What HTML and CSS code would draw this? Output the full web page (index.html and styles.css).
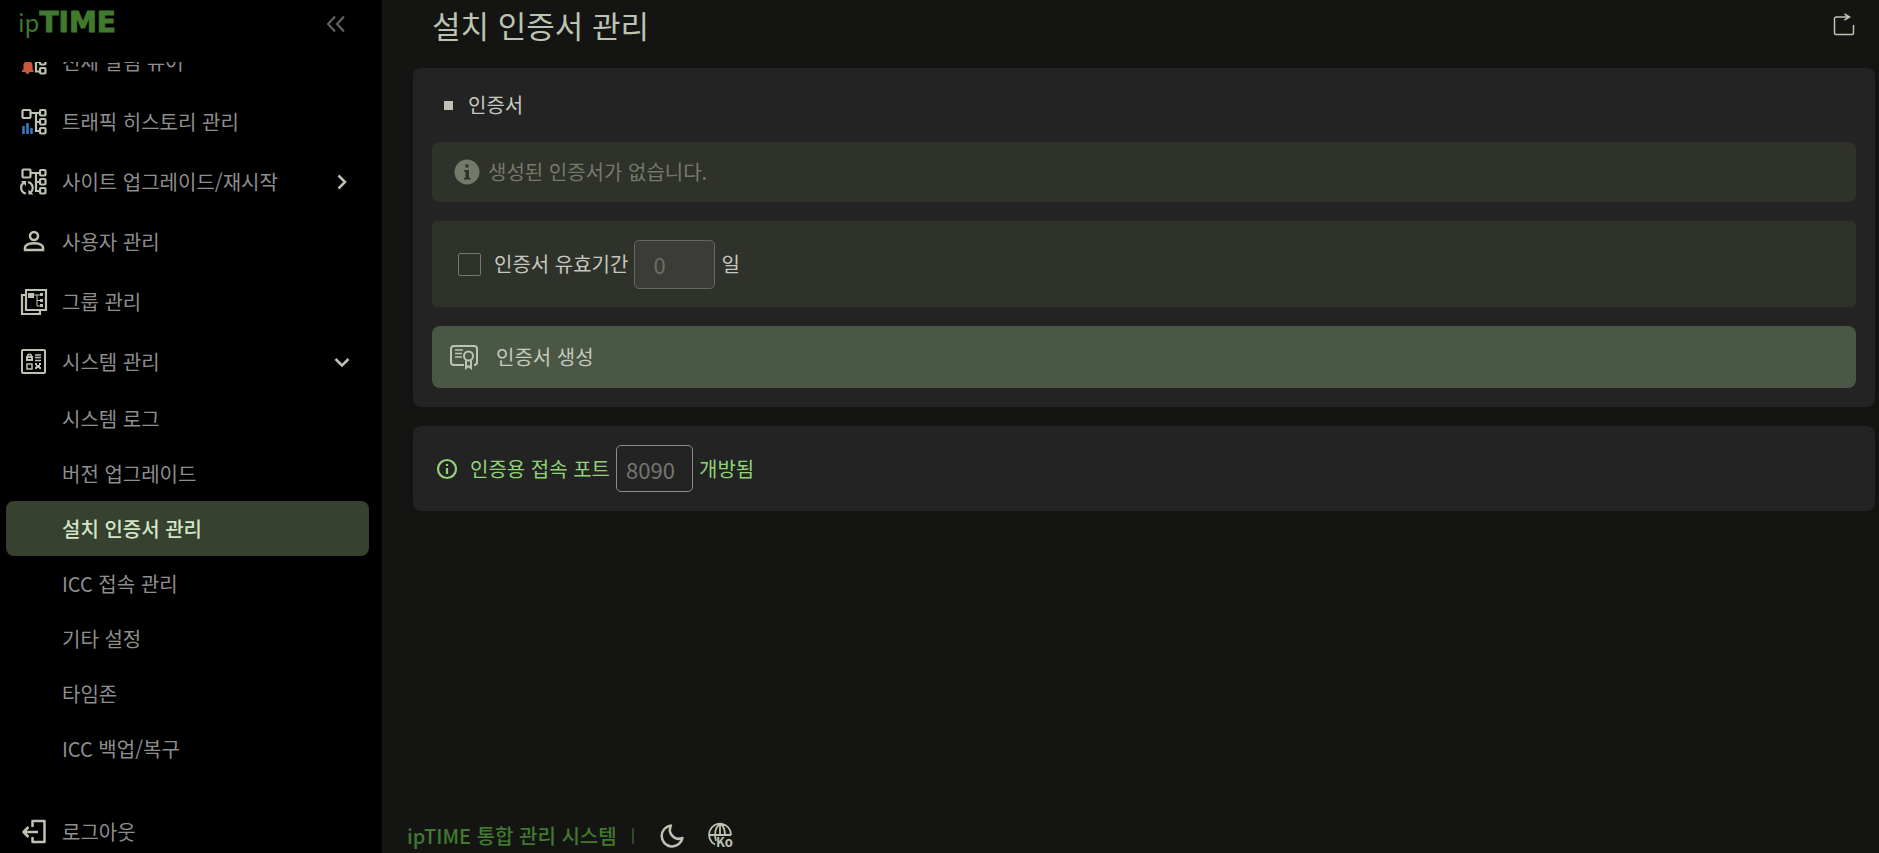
FILE: index.html
```
<!DOCTYPE html>
<html lang="ko">
<head>
    <meta charset="UTF-8">
    <meta name="viewport" content="width=device-width, initial-scale=1.0">
    <title>ipTIME 통합 관리 시스템</title>
    <link rel="stylesheet" href="styles.css">
</head>
<body>
    <div class="layout">
        <aside class="sidebar">
            <div class="sidebar-header">
                <a href="#" class="logo"><span class="logo-ip">ip</span><span class="logo-time">TIME</span></a>
                <button type="button" class="icon-button" aria-label="메뉴 접기">
                    <svg width="20" height="18" viewBox="0 0 20 18" fill="none" stroke="#666660" stroke-width="2"><path d="M9 1.500 2 9l7 7.500M18 1.500 11 9l7 7.500"/></svg>
                </button>
            </div>

            <nav class="menu">
                <div class="menu-scroll">
                    <a href="#" class="menu-item">
                        <svg class="icon" viewBox="0 0 28 28" fill="none" stroke="#bcc3b2" stroke-width="2.200"><path d="M2.500 2.500h8v8h-8zM10 5h9M16 5v18.500h4M16 14h4"/><rect x="20" y="2" width="5.500" height="5.500" rx="1"/><rect x="20" y="11" width="5.500" height="5.500" rx="1"/><rect x="20" y="20" width="5.500" height="5.500" rx="1"/><path d="M2 24v-1.500l1.500-1.500v-4c0-5 9-5 9 0v4l1 1.500V24h-4a2 2 0 0 1-4 0z" fill="#c9583e" stroke="none"/></svg>
                        <span>전체 알림 뷰어</span>
                    </a>
                    <a href="#" class="menu-item">
                        <svg class="icon" viewBox="0 0 28 28" fill="none" stroke="#bcc3b2" stroke-width="2.200"><rect x="2.500" y="2" width="8" height="8" rx="1"/><path d="M10.500 5h9M16 5v18h4M16 14h4"/><rect x="20" y="2" width="5.500" height="5.500" rx="1"/><rect x="20" y="11" width="5.500" height="5.500" rx="1"/><rect x="20" y="20" width="5.500" height="5.500" rx="1"/><path d="M3.500 26v-8M7.500 26V15M11.500 26v-6" stroke="#3d7cc9" stroke-width="2.500"/></svg>
                        <span>트래픽 히스토리 관리</span>
                    </a>
                    <a href="#" class="menu-item">
                        <svg class="icon" viewBox="0 0 28 28" fill="none" stroke="#bcc3b2" stroke-width="2.200"><rect x="2.500" y="1.500" width="8" height="8" rx="1"/><path d="M10.500 5h9M16 5v18h4M16 14h4"/><rect x="20" y="2" width="5.500" height="5.500" rx="1"/><rect x="20" y="11" width="5.500" height="5.500" rx="1"/><rect x="20" y="20" width="5.500" height="5.500" rx="1"/><path d="M6 25.500A6 6 0 0 1 4 14.500M8 14a6 6 0 0 1 2.500 10.500"/><path d="M1 13h5v5zM13.500 26.500h-5v-5z" fill="#bcc3b2" stroke="none"/></svg>
                        <span>사이트 업그레이드/재시작</span>
                        <svg class="chevron" viewBox="0 0 16 16" fill="none" stroke="#bcc3b2" stroke-width="2.500"><path d="m4.500 1.500 6.500 6.500-6.500 6.500"/></svg>
                    </a>
                    <a href="#" class="menu-item">
                        <svg class="icon" viewBox="0 0 28 28" fill="none" stroke="#bcc3b2" stroke-width="2.500"><circle cx="14" cy="8" r="4"/><path d="M5 22v-2c0-6.500 18-6.500 18 0v2z"/></svg>
                        <span>사용자 관리</span>
                    </a>
                    <a href="#" class="menu-item">
                        <svg class="icon" viewBox="0 0 28 28" fill="none" stroke="#bcc3b2" stroke-width="2.200"><path d="M6 2h20v20H6z"/><path d="M5 7H2v19h18v-3"/><path d="M8 5h6v5H8z" fill="#bcc3b2" stroke="none"/><path d="M14 7h6M17 7v11h3M17 12.500h3" stroke-width="1"/><path d="M20 5h3v3h-3zM20 11h3v3h-3zM20 16h3v3h-3z" fill="#bcc3b2" stroke="none"/></svg>
                        <span>그룹 관리</span>
                    </a>
                    <a href="#" class="menu-item">
                        <svg class="icon" viewBox="0 0 28 28" fill="none" stroke="#bcc3b2" stroke-width="2"><rect x="2" y="2" width="23" height="23" rx="1"/><path d="M7 9h5v3H7z"/><path d="M7.500 8.500c0-3 4-3 4 0" stroke-width="1.500"/><path d="M15 7h6M15 9.500h6M15 12.500h6" stroke-width="1.500"/><path d="M7 16h5v5H7z" stroke-width="1.500"/><path d="M15 15h2v2h2v-2h2v2h-1v2h1v2h-2v-1h-2v1h-2v-2h1v-2h-1z" fill="#bcc3b2" stroke="none"/></svg>
                        <span>시스템 관리</span>
                        <svg class="chevron" viewBox="0 0 16 16" fill="none" stroke="#bcc3b2" stroke-width="2.500"><path d="m1.500 5 6.500 6.500L14.500 5"/></svg>
                    </a>
                    <a href="#" class="submenu-item">시스템 로그</a>
                    <a href="#" class="submenu-item">버전 업그레이드</a>
                    <a href="#" class="submenu-item active">설치 인증서 관리</a>
                    <a href="#" class="submenu-item">ICC 접속 관리</a>
                    <a href="#" class="submenu-item">기타 설정</a>
                    <a href="#" class="submenu-item">타임존</a>
                    <a href="#" class="submenu-item">ICC 백업/복구</a>
                </div>
            </nav>

            <a href="#" class="menu-item logout">
                <svg class="icon" viewBox="0 0 28 28" fill="none" stroke="#bcc3b2" stroke-width="2.500" stroke-linejoin="round"><path d="M12.500 9V3h12v21h-12v-5M18 14H3M8.500 9l-5 5 5 5"/></svg>
                <span>로그아웃</span>
            </a>
        </aside>

        <main class="content">
            <header class="page-header">
                <h1>설치 인증서 관리</h1>
                <button type="button" class="icon-button" aria-label="새로고침">
                    <svg width="22" height="24" viewBox="0 0 22 24" fill="none" stroke="#bcc3b2" stroke-width="1.500"><path d="M15 4H3a1.500 1.500 0 0 0-1.500 1.500V20A1.500 1.500 0 0 0 3 21.500h16a1.500 1.500 0 0 0 1.500-1.500v-8M11.500 1l5 3-5 3"/></svg>
                </button>
            </header>

            <section class="card">
                <h2>인증서</h2>
                <div class="notice">
                    <svg width="26" height="26" viewBox="0 0 26 26"><circle cx="13" cy="13" r="12.500" fill="#75796a"/><path d="M11.500 5.500h3v3h-3zM10 11h5v8h1.500v1.500H10V19h1.500v-6.500H10z" fill="#2f312b"/></svg>
                    <p>생성된 인증서가 없습니다.</p>
                </div>
                <div class="period">
                    <input type="checkbox" id="usePeriod">
                    <label for="usePeriod">인증서 유효기간</label>
                    <input type="text" id="period" class="period-input" value="0" aria-label="유효기간" disabled>
                    <span>일</span>
                </div>
                <button type="button" class="create-button">
                    <svg width="28" height="26" viewBox="0 0 28 26" fill="none" stroke="#bcc3b2" stroke-width="2"><path d="M14 21H4a3 3 0 0 1-3-3V5a3 3 0 0 1 3-3h20a3 3 0 0 1 3 3v13a3 3 0 0 1-3 3"/><path d="M5 6h8M5 9.500h7M5 13h7" stroke-width="1.500"/><circle cx="18.500" cy="12" r="4.500"/><path d="M16 16.500V24l2.500-2 2.500 2v-7.500"/></svg>
                    <span>인증서 생성</span>
                </button>
            </section>

            <section class="card port-card">
                <svg width="22" height="22" viewBox="0 0 22 22" fill="none" stroke="#8fd278" stroke-width="2.200"><circle cx="11" cy="11" r="9"/><path d="M11 10v6M11 6v2"/></svg>
                <label for="port">인증용 접속 포트</label>
                <input type="text" id="port" class="port-input" value="8090" readonly>
                <span>개방됨</span>
            </section>

            <footer class="footer">
                <span class="footer-name">ipTIME 통합 관리 시스템</span>
                <span class="footer-line"></span>
                <button type="button" class="icon-button" aria-label="다크 모드">
                    <svg width="26" height="26" viewBox="0 0 26 26" fill="none" stroke="#bcc3b2" stroke-width="2.500" stroke-linejoin="round"><path d="M12 2.500A10.500 10.500 0 1 0 23.500 15 9 9 0 0 1 12 2.500z"/></svg>
                </button>
                <button type="button" class="icon-button" aria-label="언어 선택">
                    <svg class="lang-icon" width="28" height="28" viewBox="0 0 28 28" fill="none" stroke="#bcc3b2" stroke-width="1.800"><path d="M8 22.500A11 11 0 1 1 24 13M2 13h22M9 19c-2-6-1-14 4-17 4 2 5 6 5 11M13 2v11"/><text x="9" y="25" class="lang-text">Ko</text></svg>
                </button>
            </footer>
        </main>
    </div>
</body>
</html>
```
FILE: styles.css
```
* {
    box-sizing: border-box;
}
body {
    margin: 0;
    font-family: "Noto Sans CJK KR", "Noto Sans", sans-serif;
    font-size: 20px;
    line-height: 30px;
    color: #c4c8be;
    background-color: #141512;
}
a {
    color: inherit;
    text-decoration: none;
}
h1, h2, p {
    margin: 0;
    font-weight: normal;
}
button, input {
    font-family: inherit;
    font-size: inherit;
    line-height: inherit;
    color: inherit;
}
.layout {
    display: flex;
    height: 100vh;
}
.icon-button {
    display: flex;
    padding: 0;
    border: none;
    background: none;
    cursor: pointer;
}

/* sidebar */
.sidebar {
    display: flex;
    flex-direction: column;
    flex: 0 0 382px;
    background-color: #000;
}
.sidebar-header {
    display: flex;
    align-items: center;
    justify-content: space-between;
    flex: none;
    height: 62px;
    padding: 0 36px 14px 18px;
}
.logo {
    display: flex;
    align-items: baseline;
    padding-bottom: 4px;
    color: #41792e;
}
.logo-ip {
    font-size: 24px;
}
.logo-time {
    font-family: "DejaVu Sans", sans-serif;
    font-size: 28px;
    font-weight: bold;
    -webkit-text-stroke: 1px #41792e;
}
.menu {
    flex: 1;
    min-height: 0;
    overflow: hidden;
}
.menu-scroll {
    margin-top: -31px;
}
.menu-item {
    display: flex;
    align-items: center;
    gap: 14px;
    height: 60px;
    padding: 2px 32px 0 20px;
    color: #8e8e8e;
}
.icon {
    flex: none;
    width: 28px;
    height: 28px;
}
.chevron {
    width: 16px;
    height: 16px;
    margin-left: auto;
}
.submenu-item {
    display: flex;
    align-items: center;
    height: 55px;
    margin: 0 13px 0 6px;
    padding-left: 56px;
    border-radius: 8px;
    color: #8e8e8e;
}
.submenu-item.active {
    background-color: #364130;
    color: #d3e5c6;
    font-weight: 500;
}
.logout {
    flex: none;
    margin-bottom: -8px;
}

/* content */
.content {
    display: flex;
    flex-direction: column;
    flex: 1;
    min-width: 0;
    padding: 0 4px 0 31px;
}
.page-header {
    display: flex;
    align-items: center;
    justify-content: space-between;
    height: 68px;
    padding: 0 20px 18px 19px;
    color: #bcc3b2;
}
h1 {
    font-size: 31px;
    line-height: 44px;
}
.card {
    display: flex;
    flex-direction: column;
    gap: 19px;
    margin-bottom: 19px;
    padding: 19px;
    border-radius: 8px;
    background-color: #232323;
}
h2 {
    display: flex;
    align-items: center;
    gap: 15px;
    height: 36px;
    padding-left: 12px;
    font-size: 20px;
}
h2::before {
    content: "";
    width: 9px;
    height: 9px;
    background-color: #bcc3b2;
}
.notice {
    display: flex;
    align-items: center;
    gap: 8px;
    height: 60px;
    padding: 0 22px;
    border-radius: 8px;
    background-color: #2f312b;
    color: #75796a;
}
.period {
    display: flex;
    align-items: center;
    gap: 6px;
    height: 86px;
    padding: 0 26px;
    border-radius: 6px;
    background-color: #2f312b;
}
input[type="checkbox"] {
    appearance: none;
    width: 23px;
    height: 23px;
    margin: 0 7px 0 0;
    border: 1px solid #75796a;
    border-radius: 2px;
}
input[type="text"] {
    padding: 0 9px;
    border: 1px solid #8e8e88;
    border-radius: 5px;
    background-color: transparent;
    color: #75756e;
    font-size: 22px;
}
input.period-input {
    width: 81px;
    height: 49px;
    padding: 0 18px;
    border-color: #646660;
    background-color: #3b3c37;
    color: #6c6e67;
}
.create-button {
    display: flex;
    align-items: center;
    gap: 18px;
    height: 62px;
    padding: 0 18px;
    border: none;
    border-radius: 8px;
    background-color: #4b5745;
    color: #c4c8be;
    cursor: pointer;
}
.port-card {
    flex-direction: row;
    align-items: center;
    gap: 6px;
    color: #8fd278;
}
.port-card svg {
    margin: 0 6px 0 4px;
}
input.port-input {
    width: 77px;
    height: 47px;
}

/* footer */
.footer {
    display: flex;
    align-items: center;
    height: 34px;
    margin-top: auto;
    margin-left: -6px;
    color: #41792e;
}
.footer-name {
    font-weight: 500;
}
.footer-line {
    width: 2px;
    height: 16px;
    margin: 0 25px 0 15px;
    background-color: #2b4d21;
}
.footer .icon-button + .icon-button {
    margin-left: 22px;
}
.lang-icon {
    overflow: visible;
}
.lang-text {
    fill: #bcc3b2;
    stroke: none;
    font-size: 13px;
    font-weight: bold;
}
```
